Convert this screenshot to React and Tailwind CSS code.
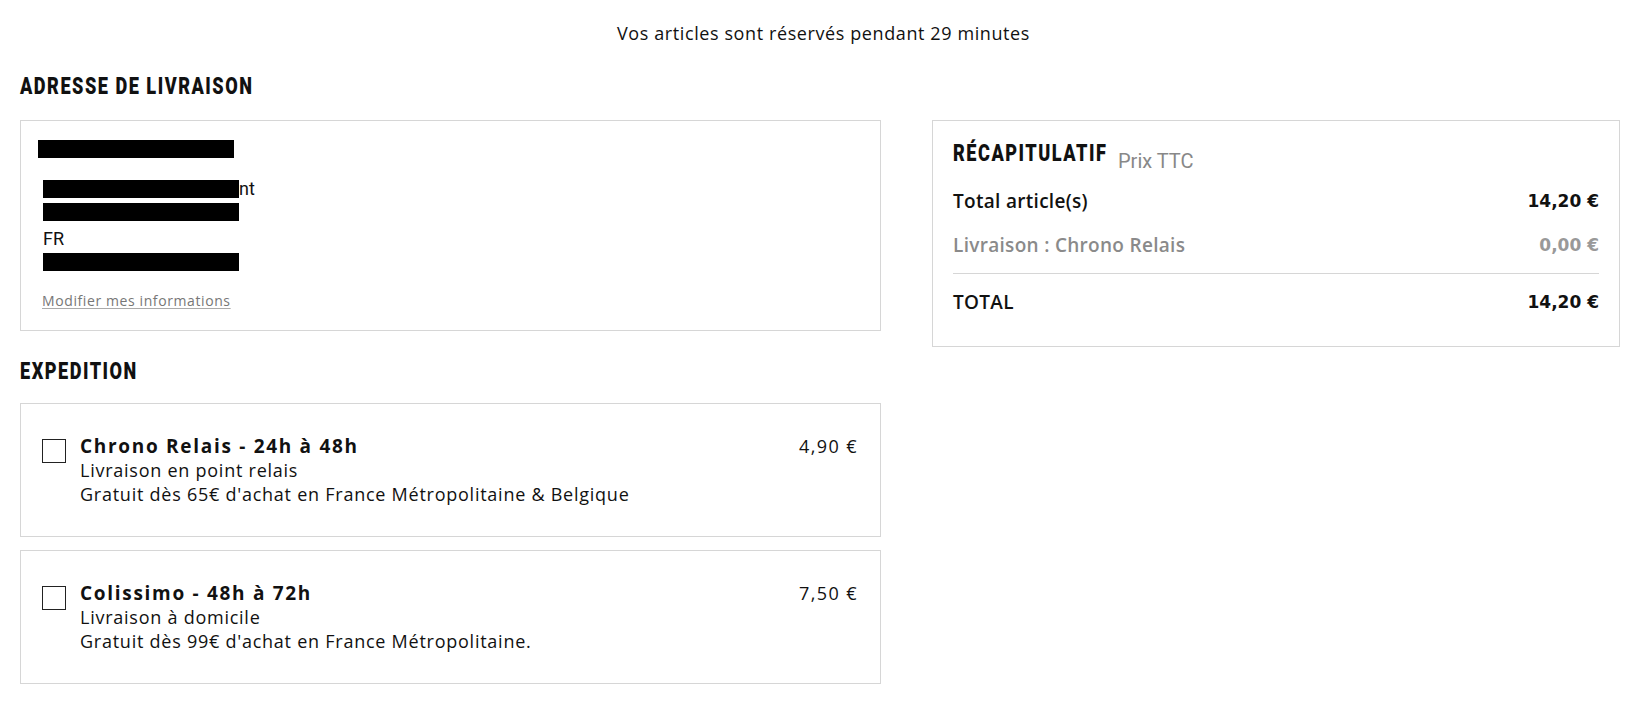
export default function App() {
  const body = { fontFamily: "'Open Sans', 'Noto Sans', sans-serif" };
  const head = { fontFamily: "Roboto, 'Liberation Sans', sans-serif" };
  const Heading = ({ children, w }) => (
    <div className={`h-[36px] flex items-center ${w}`}>
      <span
        className="inline-block whitespace-nowrap origin-left scale-x-[0.755] text-[24px] font-black tracking-[2px] leading-[36px] text-[#111] uppercase"
        style={head}
      >
        {children}
      </span>
    </div>
  );
  const Box = ({ w }) => <div className={`bg-black h-[18px] ${w}`} />;
  const Option = ({ title, price, l1, l2 }) => (
    <div className="border border-[#d6d6d6] h-[134px] px-[21px] pt-[30px] flex">
      <div className="w-[24px] h-[24px] border-[1.5px] border-[#222] mt-[5px] shrink-0" />
      <div className="ml-[14px] flex-1 text-[18px] leading-[24px] tracking-[0.75px] text-[#111]">
        <div className="font-bold tracking-[1.7px] text-[19px]">{title}</div>
        <div>{l1}</div>
        <div>{l2}</div>
      </div>
      <div className="text-[18px] leading-[24px] tracking-[1.4px] text-[#111] pr-[1px]">{price}</div>
    </div>
  );
  const price = { fontFamily: "'DejaVu Sans', sans-serif" };
  return (
    <div className="w-full min-h-[710px] bg-white px-[20px]" style={body}>
      <div className="text-center text-[18px] leading-[24px] tracking-[0.6px] pt-[21px] text-[#111]">
        Vos articles sont réservés pendant 29 minutes
      </div>
      <div className="flex mt-[23px]">
        <div className="w-[861px] shrink-0">
          <Heading>Adresse de livraison</Heading>
          <div className="mt-[16px] border border-[#d6d6d6] h-[211px] pl-[17px] pt-[19px] text-[17px] text-[#111]">
            <Box w="w-[196px]" />
            <div className="pl-[5px] mt-[20px] flex items-center leading-[22px]">
              <div className="bg-black h-[18px] w-[196px]" />
              <span style={head} className="text-[18px]">nt</span>
            </div>
            <div className="pl-[5px] mt-[3px]"><Box w="w-[196px]" /></div>
            <div className="pl-[5px] mt-[6px] leading-[24px] text-[18px]" style={head}>FR</div>
            <div className="pl-[5px] mt-[2px]"><Box w="w-[196px]" /></div>
            <div className="pl-[4px] mt-[19px] text-[14px] tracking-[0.6px] text-[#777] underline underline-offset-2 decoration-[#aaa]">
              Modifier mes informations
            </div>
          </div>
          <div className="mt-[22px]">
            <Heading>Expedition</Heading>
          </div>
          <div className="mt-[14px] flex flex-col gap-[13px]">
            <Option
              title="Chrono Relais - 24h à 48h"
              price="4,90 €"
              l1="Livraison en point relais"
              l2="Gratuit dès 65€ d'achat en France Métropolitaine & Belgique"
            />
            <Option
              title="Colissimo - 48h à 72h"
              price="7,50 €"
              l1="Livraison à domicile"
              l2="Gratuit dès 99€ d'achat en France Métropolitaine."
            />
          </div>
        </div>
        <div className="ml-[51px] w-[688px] shrink-0 mt-[52px]">
          <div className="border border-[#d6d6d6] h-[227px] px-[20px] pt-[14px]">
            <div className="flex items-start">
              <Heading w="w-[150px]">Récapitulatif</Heading>
              <span className="ml-[15px] mt-[12px] text-[20px] text-[#888] leading-[28px]" style={head}>Prix TTC</span>
            </div>
            <div className="mt-[14px] flex justify-between text-[19px] tracking-[0.3px] font-semibold text-[#111] leading-[24px]">
              <span>Total article(s)</span>
              <span className="font-bold text-[17px] tracking-normal" style={price}>14,20 €</span>
            </div>
            <div className="mt-[20px] flex justify-between text-[19px] tracking-[0.3px] font-semibold text-[#8a8a8a] leading-[24px]">
              <span>Livraison : Chrono Relais</span>
              <span className="font-bold text-[17px] tracking-normal text-[#999]" style={price}>0,00 €</span>
            </div>
            <div className="mt-[16px] border-t border-[#d6d6d6]" />
            <div className="mt-[16px] flex justify-between text-[19px] tracking-[0.3px] font-semibold text-[#111] leading-[24px]">
              <span>TOTAL</span>
              <span className="font-bold text-[17px] tracking-normal" style={price}>14,20 €</span>
            </div>
          </div>
        </div>
      </div>
    </div>
  );
}
